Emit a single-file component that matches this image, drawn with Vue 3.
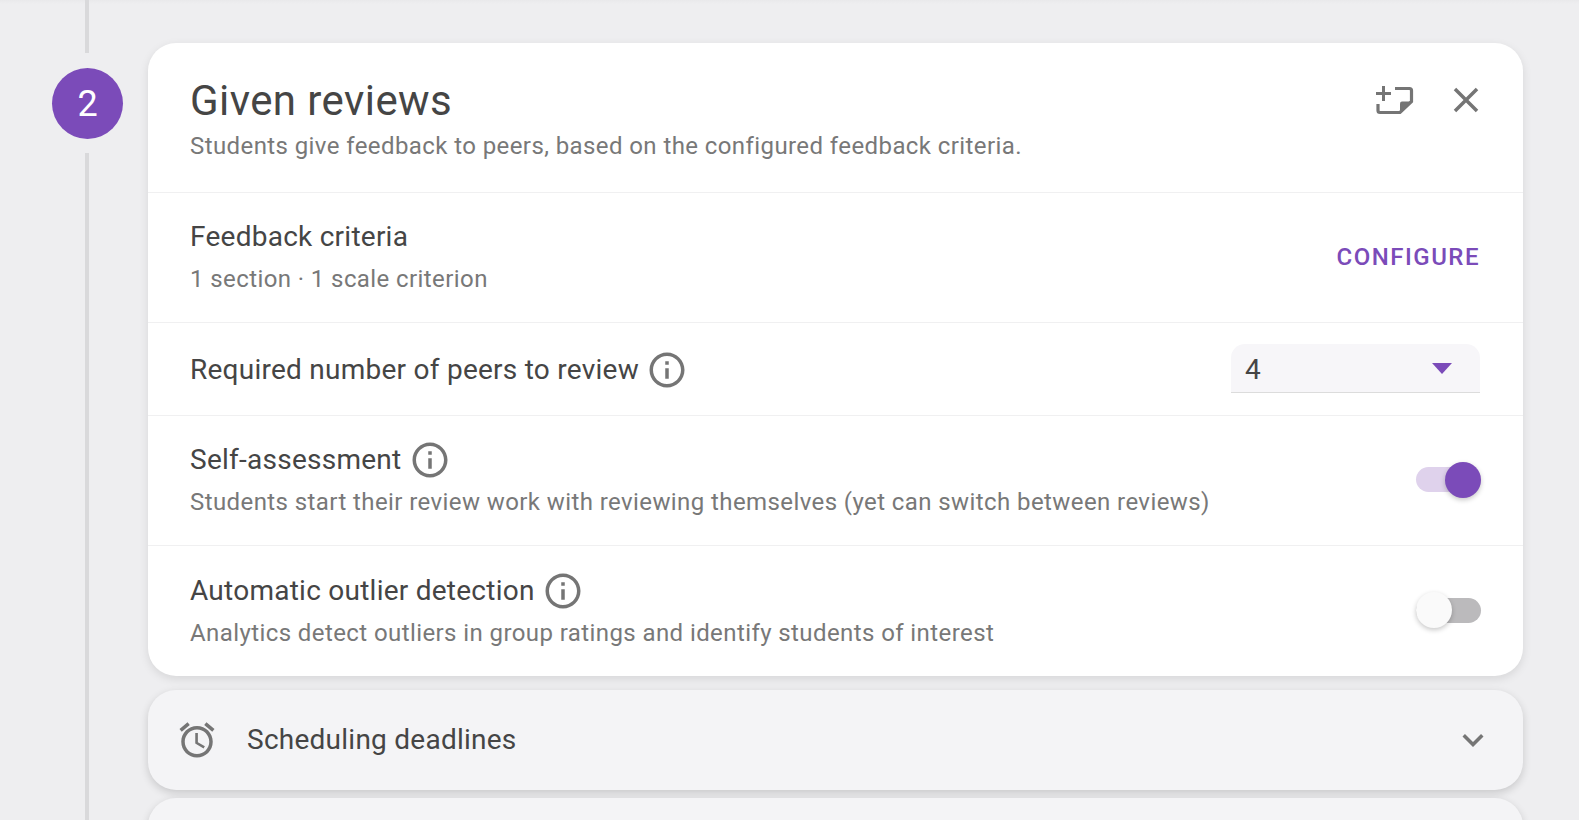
<template>
  <div class="page">
    <div class="rail">
      <div class="line top"></div>
      <div class="step">2</div>
      <div class="line rest"></div>
    </div>
    <main class="stack">
      <section class="card main">
        <header class="row head">
          <div class="grow">
            <h1>Given reviews</h1>
            <p class="sub">Students give feedback to peers, based on the configured feedback criteria.</p>
          </div>
          <div class="actions">
            <svg class="note" width="38" height="30" viewBox="0 0 38 30" fill="none">
              <path d="M0 8.500h15M7.500 1v15" stroke="#757575" stroke-width="3" />
              <path d="M19 3.500h14.500a2 2 0 0 1 2 2V16.500L24 27.500H4a2 2 0 0 1-2-2V19" stroke="#757575" stroke-width="3.200" />
              <path d="M35.500 16.500H26a2 2 0 0 0-2 2v9z" fill="#757575" />
            </svg>
            <svg class="close" width="42" height="42" viewBox="0 0 24 24"><path fill="#757575" d="M19 6.410L17.590 5 12 10.590 6.410 5 5 6.410 10.590 12 5 17.590 6.410 19 12 13.410 17.590 19 19 17.590 13.410 12z" /></svg>
          </div>
        </header>
        <div class="row criteria">
          <div class="grow">
            <div class="label">Feedback criteria</div>
            <p class="sub second">1 section · 1 scale criterion</p>
          </div>
          <span class="link">CONFIGURE</span>
        </div>
        <div class="row peers">
          <div class="label grow inline tight">Required number of peers to review
            <svg class="info" viewBox="0 0 24 24"><path :d="infoPath" /></svg>
          </div>
          <div class="select">
            <span>4</span>
            <i class="caret"></i>
          </div>
        </div>
        <div class="row toggle-row self">
          <div class="grow">
            <div class="label inline">Self-assessment
              <svg class="info" viewBox="0 0 24 24"><path :d="infoPath" /></svg>
            </div>
            <p class="sub second">Students start their review work with reviewing themselves (yet can switch between reviews)</p>
          </div>
          <div class="switch on"><i></i></div>
        </div>
        <div class="row toggle-row outlier">
          <div class="grow">
            <div class="label inline tight">Automatic outlier detection
              <svg class="info" viewBox="0 0 24 24"><path :d="infoPath" /></svg>
            </div>
            <p class="sub second">Analytics detect outliers in group ratings and identify students of interest</p>
          </div>
          <div class="switch"><i></i></div>
        </div>
      </section>
      <section class="card collapsed">
        <svg class="glyph" viewBox="0 0 24 24"><path fill="#757575" d="M22 5.720l-4.600-3.860-1.290 1.530 4.600 3.860L22 5.720zM7.880 3.390L6.600 1.860 2 5.710l1.290 1.530 4.590-3.850zM12.500 8H11v6l4.750 2.850.75-1.230-4-2.370V8zM12 4c-4.970 0-9 4.030-9 9s4.030 9 9 9 9-4.030 9-9-4.030-9-9-9zm0 16c-3.870 0-7-3.130-7-7s3.130-7 7-7 7 3.130 7 7-3.130 7-7 7z" /></svg>
        <span class="label grow">Scheduling deadlines</span>
        <svg class="glyph" viewBox="0 0 24 24"><path fill="#757575" d="M16.590 8.590L12 13.170 7.410 8.590 6 10l6 6 6-6z" /></svg>
      </section>
      <section class="card collapsed next"></section>
    </main>
  </div>
</template>

<script setup>
const infoPath = 'M11 7h2v2h-2zm0 4h2v6h-2zm1-9C6.480 2 2 6.480 2 12s4.480 10 10 10 10-4.480 10-10S17.520 2 12 2zm0 18c-4.410 0-8-3.590-8-8s3.590-8 8-8 8 3.590 8 8-3.590 8-8 8z'
</script>

<style>
html, body { margin: 0; background: #eeeef0; overflow: hidden; }
</style>

<style scoped>
.page {
  display: flex;
  height: 820px;
  overflow: hidden;
  font-family: Roboto, "Liberation Sans", sans-serif;
  background: linear-gradient(#e9e9eb, #eeeef0 4px);
}
.rail {
  width: 148px;
  flex: none;
  display: flex;
  flex-direction: column;
  align-items: center;
  padding: 0 25px 0 52px;
  box-sizing: border-box;
}
.line { width: 4px; margin-right: 1px; background: #d9d9db; }
.line.top { height: 53px; margin-bottom: 15px; }
.line.rest { flex: 1; margin-top: 14px; }
.step {
  width: 71px;
  height: 71px;
  flex: none;
  border-radius: 50%;
  background: #7b4bb9;
  color: #fff;
  font-size: 36px;
  display: flex;
  align-items: center;
  justify-content: center;
}
.stack {
  width: 1375px;
  padding-top: 43px;
  display: flex;
  flex-direction: column;
  gap: 14px;
}
.card {
  border-radius: 28px;
  flex: none;
  box-shadow: 0 3px 10px rgba(0, 0, 0, 0.1);
}
.main { background: #fff; }
.row {
  display: flex;
  align-items: center;
  padding: 0 43px 0 42px;
  box-sizing: border-box;
  border-bottom: 1px solid #f0f0f1;
}
.row:last-child { border-bottom: 0; }
.head { height: 150px; align-items: flex-start; padding-top: 30px; }
.criteria { height: 130px; }
.peers { height: 93px; }
.self { height: 130px; }
.outlier { height: 130px; padding-top: 2px; }
.grow { flex: 1; min-width: 0; }
h1 {
  margin: 0;
  font-size: 42px;
  line-height: 56px;
  font-weight: 400;
  color: #454545;
  letter-spacing: 0.42px;
}
.sub {
  margin: 0;
  font-size: 24px;
  line-height: 34px;
  color: #787878;
  letter-spacing: 0.41px;
}
.second { margin-top: 8px; }
.label {
  font-size: 28px;
  line-height: 34px;
  color: #454545;
  letter-spacing: 0.25px;
}
.peers .label { margin-top: 2px; }
.inline { display: flex; align-items: center; gap: 8px; }
.tight { gap: 7px; }
.info { width: 42px; height: 42px; fill: #757575; margin: -4px 0; flex: none; }
.actions { display: flex; align-items: center; gap: 31px; padding-top: 6px; }
.note { display: block; }
.close { display: block; margin-right: -7px; }
.link {
  color: #7b4bb9;
  font-size: 24px;
  font-weight: 500;
  letter-spacing: 1.5px;
  margin-bottom: 2px;
}
.select {
  width: 249px;
  height: 49px;
  box-sizing: border-box;
  background: #f7f6f9;
  border-bottom: 1px solid #dcdcdc;
  border-radius: 14px 14px 0 0;
  padding: 4px 28px 0 14px;
  margin-bottom: 2px;
  display: flex;
  align-items: center;
  justify-content: space-between;
  font-size: 28px;
  color: #454545;
}
.caret {
  width: 0;
  height: 0;
  border-left: 10.500px solid transparent;
  border-right: 10.500px solid transparent;
  border-top: 11px solid #7b4bb9;
  margin-bottom: 2px;
}
.switch {
  width: 65px;
  height: 25px;
  border-radius: 13px;
  background: #bbbabc;
  display: flex;
  align-items: center;
  flex: none;
  margin-right: -1px;
}
.self .switch { margin-bottom: 2px; }
.outlier .switch { margin-bottom: 4px; }
.switch i {
  width: 36px;
  height: 36px;
  border-radius: 50%;
  background: #fafafa;
  box-shadow: 0 2px 5px rgba(0, 0, 0, 0.22);
}
.switch.on { background: #dfd2ec; justify-content: flex-end; }
.switch.on i { background: #7b4bb9; }
.collapsed {
  background: #f4f4f6;
  height: 100px;
  display: flex;
  align-items: center;
  padding: 0 29px 0 28px;
  gap: 29px;
  box-shadow: 0 3px 8px rgba(0, 0, 0, 0.16);
  box-sizing: border-box;
}
.glyph { width: 42px; height: 42px; flex: none; }
.next { margin-top: -6px; }
</style>
